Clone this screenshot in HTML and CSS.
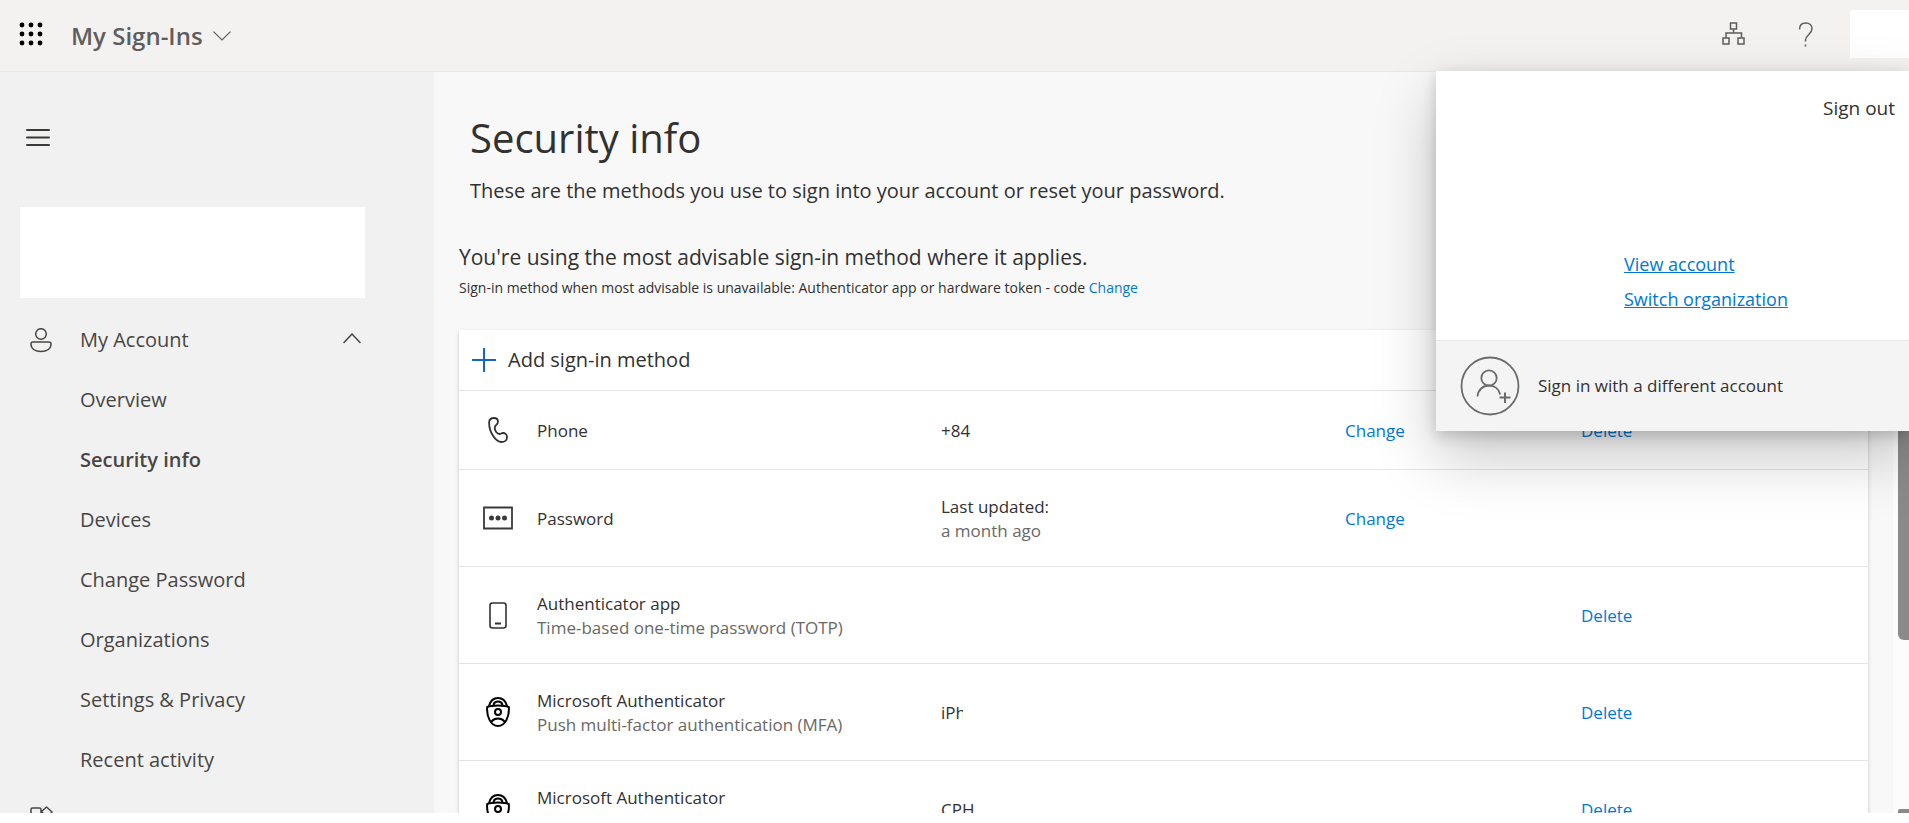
FILE: index.html
```html
<!DOCTYPE html>
<html lang="en">
<head>
<meta charset="utf-8">
<title>My Sign-Ins | Security info</title>
<link rel="stylesheet" href="styles.css">
</head>
<body>
<svg class="sprite" aria-hidden="true">
  <symbol id="authenticator" viewBox="0 0 24 30">
    <g fill="none" stroke="#000" stroke-width="2" stroke-linecap="round" stroke-linejoin="round">
      <path d="M3.200 8.600C4.500 3.800 8 1 12 1s7.500 2.800 8.800 7.600"/>
      <path d="M7.600 7.600c.6-2 2.400-3 4.400-3s3.800 1 4.400 3"/>
      <path d="M1.200 10C4 8.800 8 8.400 12 8.400s8 .4 10.800 1.600C23.600 19 19.500 29 12 29S.4 19 1.200 10z"/>
      <circle cx="12" cy="15" r="3"/>
      <path d="M5.400 24.600c1.800-2 4-3 6.600-3s4.800 1 6.600 3"/>
    </g>
  </symbol>
</svg>
<header class="topbar">
  <button class="icon-btn waffle" aria-label="App launcher">
    <svg width="24" height="24" viewBox="0 0 24 24" fill="#000"><circle cx="3" cy="3" r="2.400"/><circle cx="12" cy="3" r="2.400"/><circle cx="21" cy="3" r="2.400"/><circle cx="3" cy="12" r="2.400"/><circle cx="12" cy="12" r="2.400"/><circle cx="21" cy="12" r="2.400"/><circle cx="3" cy="21" r="2.400"/><circle cx="12" cy="21" r="2.400"/><circle cx="21" cy="21" r="2.400"/></svg>
  </button>
  <button class="app-title">My Sign-Ins
    <svg width="18" height="10" viewBox="0 0 18 10" fill="none" stroke="#605e5c" stroke-width="1.200"><path d="M.5.600 9 9 17.500.600"/></svg>
  </button>
  <div class="tools">
    <button class="icon-btn" aria-label="Organizations">
      <svg width="24" height="24" viewBox="0 0 24 24" fill="none" stroke="#605e5c" stroke-width="1.500"><path d="M8.500 1h6v6h-6zM1 16h6v6H1zM16 16h6v6h-6zM11.500 7v4M4 16v-5h15.500v5"/></svg>
    </button>
    <button class="icon-btn" aria-label="Help">
      <svg width="16" height="25" viewBox="0 0 16 25" fill="none" stroke="#605e5c" stroke-width="1.500"><path d="M1.500 7.500C1.500 3.500 4 1 7.800 1c3.700 0 6.200 2.400 6.200 5.700 0 5.600-6.500 6.300-6.500 11.300v1.500M7.500 22.500v2"/></svg>
    </button>
    <button class="profile" aria-label="Account"></button>
  </div>
</header>

<div class="shell">
  <aside class="sidebar">
    <button class="icon-btn menu" aria-label="Toggle navigation">
      <svg width="24" height="19" viewBox="0 0 24 19" stroke="#3b3a39" stroke-width="2" stroke-linecap="round"><path d="M1 2h22M1 9.500h22M1 17h22"/></svg>
    </button>
    <div class="identity"></div>
    <nav>
      <button class="group" aria-expanded="true">
        <svg width="22" height="25" viewBox="0 0 22 25" fill="none" stroke="#484644" stroke-width="1.500"><circle cx="11" cy="6" r="5.300"/><path d="M3 14h16a2 2 0 0 1 2 2c0 5-4.500 7.500-10 7.500S1 21 1 16a2 2 0 0 1 2-2z"/></svg>
        <span>My Account</span>
        <svg width="18" height="14" viewBox="0 0 18 14" fill="none" stroke="#484644" stroke-width="1.500" stroke-linecap="round"><path d="M1 9.500 9 1 17 9.500"/></svg>
      </button>
      <a href="#">Overview</a>
      <a href="#" class="current" aria-current="page">Security info</a>
      <a href="#">Devices</a>
      <a href="#">Change Password</a>
      <a href="#">Organizations</a>
      <a href="#">Settings &amp; Privacy</a>
      <a href="#">Recent activity</a>
      <button class="group apps" aria-label="My Apps">
        <svg width="24" height="24" viewBox="0 0 24 24" fill="none" stroke="#484644" stroke-width="1.500" stroke-linejoin="round"><path d="M11 12V3.500Q11 2 9.500 2h-7Q1 2 1 3.500V21.500Q1 23 2.500 23h17q1.500 0 1.500-1.500V14q0-2-2-2H1M11 23V12M11.500 5.500 16.500 1l5.500 5-5 5.500z"/></svg>
      </button>
    </nav>
  </aside>

  <main class="content">
    <h1>Security info</h1>
    <p class="lead">These are the methods you use to sign into your account or reset your password.</p>
    <p class="advice">You're using the most advisable sign-in method where it applies.</p>
    <p class="fallback">Sign-in method when most advisable is unavailable: Authenticator app or hardware token - code <a href="#">Change</a></p>
    <section class="card">
      <button class="add">
        <svg width="24" height="24" viewBox="0 0 24 24" stroke="#1168c0" stroke-width="2"><path d="M0 12h24M12 0v24"/></svg>
        Add sign-in method
      </button>
      <table>
        <colgroup><col class="c-icon"><col class="c-name"><col class="c-value"><col class="c-change"><col></colgroup>
        <tr class="short">
          <td class="icon"><svg width="20" height="26" viewBox="0 0 20 26" fill="none" stroke="#323130" stroke-width="1.800" stroke-linejoin="round"><path d="M1.200 4.800C1.400 2.500 3.500 1 6 1c2.300 0 3.900 1.300 4 3.500 0 3.500-3.300 3.300-3.300 6.300 0 2.700 2.200 6.200 5 6.200 1.300 0 1.800-1 3.300-1 2.200 0 4 1.800 4 4.200 0 3-2.500 4.800-5.500 4.800C7.500 25 .6 14.500 1.200 4.800z"/></svg></td>
          <td>Phone</td><td>+84</td><td><a href="#">Change</a></td><td><a href="#">Delete</a></td>
        </tr>
        <tr>
          <td class="icon"><svg width="30" height="24" viewBox="0 0 30 24" fill="#3b3a39"><path d="M1 1.500h28v21H1z" fill="none" stroke="#3b3a39" stroke-width="1.800"/><circle cx="8.500" cy="12" r="2.500"/><circle cx="15" cy="12" r="2.500"/><circle cx="21.500" cy="12" r="2.500"/></svg></td>
          <td>Password</td><td>Last updated:<br><span class="muted">a month ago</span></td><td><a href="#">Change</a></td><td></td>
        </tr>
        <tr>
          <td class="icon"><svg width="18" height="27" viewBox="0 0 18 27" fill="none" stroke="#323130" stroke-width="1.600"><rect x="1" y="1" width="16" height="25" rx="2.500"/><path d="M6 21.500h6" stroke-width="2"/></svg></td>
          <td>Authenticator app<br><span class="muted">Time-based one-time password (TOTP)</span></td><td></td><td></td><td><a href="#">Delete</a></td>
        </tr>
        <tr>
          <td class="icon"><svg width="24" height="30"><use href="#authenticator"/></svg></td>
          <td>Microsoft Authenticator<br><span class="muted">Push multi-factor authentication (MFA)</span></td><td><span class="redacted">iPh</span></td><td></td><td><a href="#">Delete</a></td>
        </tr>
        <tr>
          <td class="icon"><svg width="24" height="30"><use href="#authenticator"/></svg></td>
          <td>Microsoft Authenticator<br><span class="muted">Push multi-factor authentication (MFA)</span></td><td>CPH</td><td></td><td><a href="#">Delete</a></td>
        </tr>
      </table>
    </section>
  </main>
  <div class="scrollbar"><div class="thumb"></div><div class="arrow"></div></div>
</div>

<div class="flyout" role="dialog" aria-label="Account manager">
  <div class="flyout-body">
    <button class="signout">Sign out</button>
    <div class="flyout-links">
      <a href="#">View account</a>
      <a href="#">Switch organization</a>
    </div>
  </div>
  <button class="other">
    <svg width="60" height="60" viewBox="0 0 60 60" fill="none" stroke="#6b6b6b" stroke-width="1.800"><circle cx="30" cy="30" r="28.500"/><circle cx="29" cy="22" r="7.700"/><path d="M17.500 40.500c.6-6.600 5.400-11 11.500-11 5.600 0 10 3.600 11.200 9"/><path d="M39.500 41.500h11M45 36.500v10.500" stroke-width="2"/></svg>
    Sign in with a different account
  </button>
</div>
</body>
</html>
```
FILE: styles.css
```css
* { box-sizing: border-box; }

body {
  margin: 0;
  height: 100vh;
  padding-bottom: 10px;
  display: flex;
  flex-direction: column;
  overflow: hidden;
  background: #fff;
  color: #323130;
  font: 17px/24px "Open Sans", "Noto Sans", sans-serif;
}

button {
  border: 0;
  padding: 0;
  background: none;
  color: inherit;
  font: inherit;
  text-align: left;
}

a { color: #0078d4; text-decoration: none; }
h1, p { margin: 0; font-weight: 400; }
svg { display: block; flex: none; }
.sprite { position: absolute; width: 0; height: 0; }

.topbar {
  flex: none;
  height: 72px;
  display: flex;
  align-items: center;
  padding: 0 0 3px 19px;
  background: #f3f2f1;
  border-bottom: 1px solid #e8e8e8;
}
.icon-btn { display: flex; }
.app-title {
  display: flex;
  align-items: center;
  gap: 10px;
  margin-left: 28px;
  padding-top: 4px;
  color: #605e5c;
  font-size: 24px;
  font-weight: 600;
}
.tools { display: flex; align-items: center; gap: 52px; margin-left: auto; }
.profile { width: 59px; height: 48px; margin-left: -16px; background: #fff; }

.shell { flex: 1; min-height: 0; display: flex; overflow: hidden; }

.sidebar { flex: none; width: 434px; background: #f1f1f1; color: #484644; font-size: 20px; }
.menu { margin: 56px 0 60px 26px; }
.identity { width: 345px; height: 91px; margin: 0 0 12px 20px; background: #fff; }
.sidebar nav { display: flex; flex-direction: column; }
.sidebar nav a { padding: 18px 0 18px 80px; color: inherit; }
.sidebar nav .current { font-weight: 600; }
.group { height: 60px; width: 361px; margin-left: 30px; padding-right: 30px; display: flex; align-items: center; }
.group span { margin: 0 auto 0 28px; }
.apps { align-items: flex-start; padding-top: 16px; }

.content { flex: 1; min-width: 0; padding: 42px 25px 0; background: #f8f8f8; }
h1 { padding-left: 11px; font-size: 40px; line-height: 48px; }
.lead { padding: 17px 0 0 11px; font-size: 20px; }
.advice { padding-top: 40px; font-size: 21px; line-height: 28px; }
.fallback { padding: 5px 0 28px; font-size: 14px; }
.card { margin-top: 2px; background: #fff; box-shadow: 0 2px 4px rgba(0, 0, 0, .2); }
.add { display: flex; align-items: center; gap: 12px; height: 60px; padding-left: 13px; font-size: 20px; }

table { width: 100%; table-layout: fixed; border-collapse: collapse; }
td { height: 97px; padding: 2px 0 0; border-top: 1px solid #e5e5e5; }
.short td { height: 79px; }
.icon { padding: 0; }
.icon svg { margin: 0 auto; }
.c-icon { width: 78px; }
.c-name, .c-value { width: 404px; }
.c-change { width: 236px; }
.muted { color: #6a6866; }
.redacted { display: block; width: 22px; overflow: hidden; }

.scrollbar {
  flex: none;
  width: 16px;
  display: flex;
  flex-direction: column;
  justify-content: space-between;
  padding-left: 5px;
  background: #fcfcfc;
}
.thumb { height: 568px; border-radius: 0 0 0 6px; background: #8a8a8a; }
.arrow { height: 4px; border-radius: 2px 0 0; background: #8a8a8a; }

.flyout {
  position: absolute;
  top: 71px;
  right: 0;
  width: 473px;
  background: #fff;
  box-shadow: 0 26px 58px rgba(0, 0, 0, .22), 0 5px 14px rgba(0, 0, 0, .18);
}
.flyout-body { display: flex; flex-direction: column; padding: 25px 14px 29px 188px; }
.signout { align-self: flex-end; font-size: 19px; }
.flyout-links { display: flex; flex-direction: column; align-items: flex-start; gap: 11px; padding-top: 132px; font-size: 18px; }
.flyout-links a { text-decoration: underline; }
.other {
  display: flex;
  align-items: center;
  gap: 18px;
  width: 100%;
  height: 91px;
  padding-left: 24px;
  background: #f4f4f4;
  border-top: 1px solid #e8e8e8;
}
```
